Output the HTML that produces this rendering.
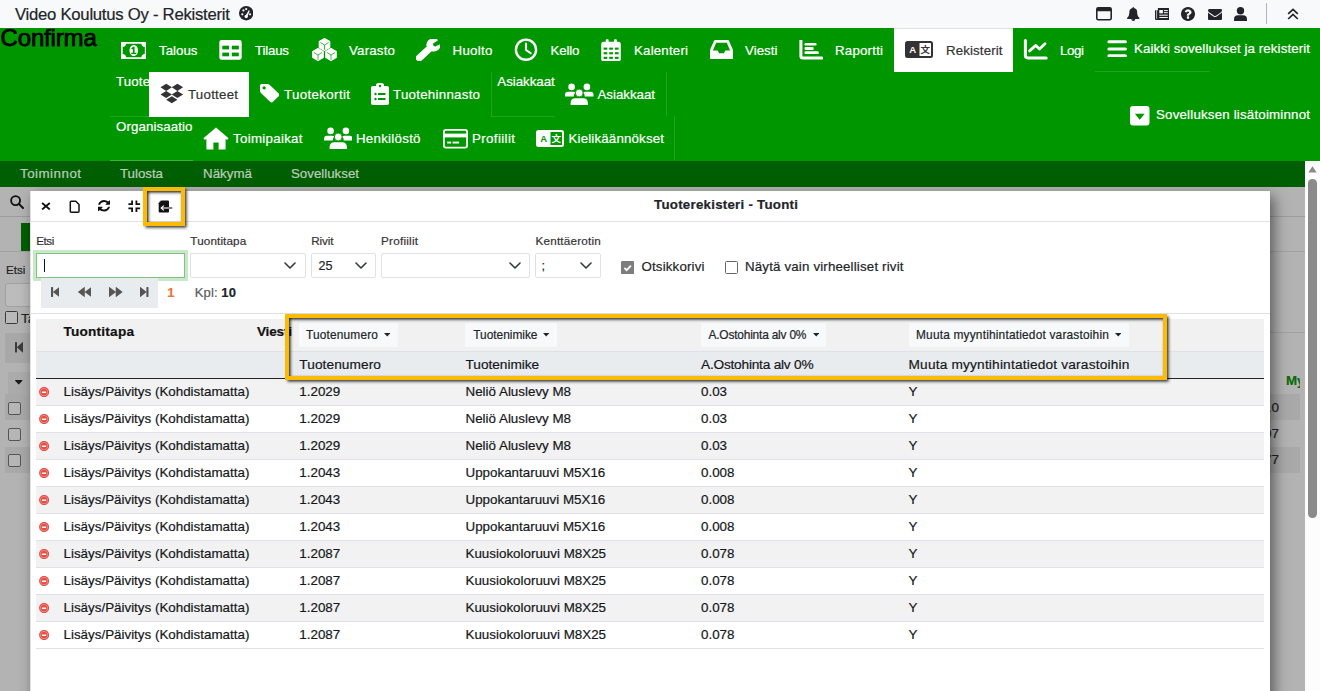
<!DOCTYPE html>
<html lang="fi"><head><meta charset="utf-8"><title>Video Koulutus Oy - Rekisterit</title>
<style>

*{box-sizing:border-box}
html,body{margin:0;padding:0}
body{width:1320px;height:691px;overflow:hidden;position:relative;background:#fff;font-family:"Liberation Sans",sans-serif;}
.t{position:absolute;white-space:nowrap;line-height:20px;font-family:"Liberation Sans",sans-serif;-webkit-text-stroke:0.2px currentColor;}
.b{position:absolute}

</style></head><body>
<div class="b" style="left:0px;top:0px;width:1320px;height:28px;background:#f8f9fa;"></div>
<div class="t" style="left:15px;top:5px;font-size:16.7px;letter-spacing:-0.257px;color:#212529;font-weight:400;">Video Koulutus Oy - Rekisterit</div>
<svg style="position:absolute;left:238.7px;top:6.4px;" width="14.4" height="14.4" viewBox="0 0 26 26" preserveAspectRatio="none"><circle cx="13" cy="13" r="13" fill="#212529"/><circle cx="6" cy="15" r="2" fill="#f8f9fa"/><circle cx="8" cy="8" r="2" fill="#f8f9fa"/><circle cx="13" cy="5.5" r="2" fill="#f8f9fa"/><circle cx="20" cy="15" r="2" fill="#f8f9fa"/><path d="M11 19 L17.5 7.5 L19.5 8.5 L15 20 Z" fill="#f8f9fa"/><circle cx="13" cy="19" r="3" fill="#f8f9fa"/></svg>
<svg style="position:absolute;left:1096px;top:7.2px;" width="16" height="13.6" viewBox="0 0 16 13.6" preserveAspectRatio="none"><rect x="0.8" y="0.8" width="14.4" height="12" rx="1.6" fill="none" stroke="#212529" stroke-width="1.6"/><rect x="0.8" y="0.8" width="14.4" height="3.4" rx="1" fill="#212529"/></svg>
<svg style="position:absolute;left:1127px;top:7px;" width="12.5" height="14" viewBox="64.0 0.0 1664.0 1792.0" preserveAspectRatio="none"><path fill="#212529" stroke="#212529" stroke-width="0" stroke-linejoin="round" transform="translate(0,1536) scale(1,-1)" d="M912 -160q0 16 -16 16q-59 0 -101.5 42.5t-42.5 101.5q0 16 -16 16t-16 -16q0 -73 51.5 -124.5t124.5 -51.5q16 0 16 16zM1728 128q0 -52 -38 -90t-90 -38h-448q0 -106 -75 -181t-181 -75t-181 75t-75 181h-448q-52 0 -90 38t-38 90q50 42 91 88t85 119.5t74.5 158.5 t50 206t19.5 260q0 152 117 282.5t307 158.5q-8 19 -8 39q0 40 28 68t68 28t68 -28t28 -68q0 -20 -8 -39q190 -28 307 -158.5t117 -282.5q0 -139 19.5 -260t50 -206t74.5 -158.5t85 -119.5t91 -88z"/></svg>
<svg style="position:absolute;left:1154.5px;top:7.6px;" width="14.4" height="12.2" viewBox="0 0 14.4 12.2" preserveAspectRatio="none"><path d="M2.9 0 H13.4 Q14.4 0 14.4 1 V11.2 Q14.4 12.2 13.4 12.2 H1.6 Q0 12.2 0 10.6 V2.2 H2.9 Z" fill="#212529"/><path d="M1.6 2.2 V10.8" stroke="#f8f9fa" stroke-width="0.7"/><rect x="4.3" y="2" width="3.6" height="3.3" fill="#f8f9fa"/><path d="M9 2.6 H12.8 M9 4.7 H12.8 M4.3 7.2 H12.8 M4.3 9.5 H12.8" stroke="#f8f9fa" stroke-width="1"/></svg>
<svg style="position:absolute;left:1181px;top:7px;" width="14" height="14" viewBox="0.0 128.0 1536.0 1536.0" preserveAspectRatio="none"><path fill="#212529" stroke="#212529" stroke-width="0" stroke-linejoin="round" transform="translate(0,1536) scale(1,-1)" d="M896 160v192q0 14 -9 23t-23 9h-192q-14 0 -23 -9t-9 -23v-192q0 -14 9 -23t23 -9h192q14 0 23 9t9 23zM1152 832q0 88 -55.5 163t-138.5 116t-170 41q-243 0 -371 -213q-15 -24 8 -42l132 -100q7 -6 19 -6q16 0 25 12q53 68 86 92q34 24 86 24q48 0 85.5 -26t37.5 -59 q0 -38 -20 -61t-68 -45q-63 -28 -115.5 -86.5t-52.5 -125.5v-36q0 -14 9 -23t23 -9h192q14 0 23 9t9 23q0 19 21.5 49.5t54.5 49.5q32 18 49 28.5t46 35t44.5 48t28 60.5t12.5 81zM1536 640q0 -209 -103 -385.5t-279.5 -279.5t-385.5 -103t-385.5 103t-279.5 279.5 t-103 385.5t103 385.5t279.5 279.5t385.5 103t385.5 -103t279.5 -279.5t103 -385.5z"/></svg>
<svg style="position:absolute;left:1208px;top:8.5px;" width="14" height="11" viewBox="0.0 256.0 1792.0 1408.0" preserveAspectRatio="none"><path fill="#212529" stroke="#212529" stroke-width="0" stroke-linejoin="round" transform="translate(0,1536) scale(1,-1)" d="M1792 826v-794q0 -66 -47 -113t-113 -47h-1472q-66 0 -113 47t-47 113v794q44 -49 101 -87q362 -246 497 -345q57 -42 92.5 -65.5t94.5 -48t110 -24.5h1h1q51 0 110 24.5t94.5 48t92.5 65.5q170 123 498 345q57 39 100 87zM1792 1120q0 -79 -49 -151t-122 -123 q-376 -261 -468 -325q-10 -7 -42.5 -30.5t-54 -38t-52 -32.5t-57.5 -27t-50 -9h-1h-1q-23 0 -50 9t-57.5 27t-52 32.5t-54 38t-42.5 30.5q-91 64 -262 182.5t-205 142.5q-62 42 -117 115.5t-55 136.5q0 78 41.5 130t118.5 52h1472q65 0 112.5 -47t47.5 -113z"/></svg>
<svg style="position:absolute;left:1234px;top:6.8px;" width="13" height="14" viewBox="0 0 13 14" preserveAspectRatio="none"><circle cx="6.5" cy="3.8" r="3.7" fill="#212529"/><path d="M0 14 V12.3 Q0 8.3 4 8.3 H9 Q13 8.3 13 12.3 V14 Z" fill="#212529"/></svg>
<div class="b" style="left:1266px;top:3px;width:1px;height:21px;background:#b0b4b8;"></div>
<svg style="position:absolute;left:1286.5px;top:7.5px;" width="12" height="12" viewBox="0 0 12 12" preserveAspectRatio="none"><path d="M1.2 5.8 L6 1.3 L10.8 5.8 M1.2 11 L6 6.5 L10.8 11" fill="none" stroke="#212529" stroke-width="1.7"/></svg>
<div class="b" style="left:0px;top:28px;width:1320px;height:133px;background:#009600;"></div>
<div class="t" style="left:0.5px;top:28px;font-size:24px;color:#000;font-weight:400;letter-spacing:-0.15px;-webkit-text-stroke:0.75px #000">Confirma</div>
<div class="b" style="left:894px;top:28px;width:119px;height:44px;background:#fff;"></div>
<div class="b" style="left:894px;top:28px;width:119px;height:1px;background:#dfe2e6;"></div>
<svg style="position:absolute;left:120.5px;top:41.5px;" width="25.5" height="17" viewBox="0.0 256.0 1920.0 1280.0" preserveAspectRatio="none"><path fill="#fff" stroke="#fff" stroke-width="0" stroke-linejoin="round" transform="translate(0,1536) scale(1,-1)" d="M768 384h384v96h-128v448h-114l-148 -137l77 -80q42 37 55 57h2v-288h-128v-96zM1280 640q0 -70 -21 -142t-59.5 -134t-101.5 -101t-138 -39t-138 39t-101.5 101t-59.5 134t-21 142t21 142t59.5 134t101.5 101t138 39t138 -39t101.5 -101t59.5 -134t21 -142zM1792 384 v512q-106 0 -181 75t-75 181h-1152q0 -106 -75 -181t-181 -75v-512q106 0 181 -75t75 -181h1152q0 106 75 181t181 75zM1920 1216v-1152q0 -26 -19 -45t-45 -19h-1792q-26 0 -45 19t-19 45v1152q0 26 19 45t45 19h1792q26 0 45 -19t19 -45z"/></svg>
<div class="t" style="left:159px;top:41px;font-size:13.3px;letter-spacing:0.011px;color:#fff;font-weight:400;">Talous</div>
<div class="t" style="left:255px;top:41px;font-size:13.3px;letter-spacing:-0.197px;color:#fff;font-weight:400;">Tilaus</div>
<div class="t" style="left:349px;top:41px;font-size:13.3px;letter-spacing:0.192px;color:#fff;font-weight:400;">Varasto</div>
<svg style="position:absolute;left:416px;top:39px;" width="24" height="22" viewBox="21.0 128.0 1641.0 1643.0" preserveAspectRatio="none"><path fill="#fff" stroke="#fff" stroke-width="90" stroke-linejoin="round" transform="translate(0,1536) scale(1,-1)" d="M384 64q0 26 -19 45t-45 19t-45 -19t-19 -45t19 -45t45 -19t45 19t19 45zM1028 484l-682 -682q-37 -37 -90 -37q-52 0 -91 37l-106 108q-38 36 -38 90q0 53 38 91l681 681q39 -98 114.5 -173.5t173.5 -114.5zM1662 919q0 -39 -23 -106q-47 -134 -164.5 -217.5 t-258.5 -83.5q-185 0 -316.5 131.5t-131.5 316.5t131.5 316.5t316.5 131.5q58 0 121.5 -16.5t107.5 -46.5q16 -11 16 -28t-16 -28l-293 -169v-224l193 -107q5 3 79 48.5t135.5 81t70.5 35.5q15 0 23.5 -10t8.5 -25z"/></svg>
<div class="t" style="left:452.5px;top:41px;font-size:13.3px;letter-spacing:0.311px;color:#fff;font-weight:400;">Huolto</div>
<div class="t" style="left:550.5px;top:41px;font-size:13.3px;letter-spacing:-0.144px;color:#fff;font-weight:400;">Kello</div>
<div class="t" style="left:634px;top:41px;font-size:13.3px;letter-spacing:0.188px;color:#fff;font-weight:400;">Kalenteri</div>
<svg style="position:absolute;left:709.5px;top:40px;" width="23" height="19" viewBox="0.0 256.0 1536.0 1280.0" preserveAspectRatio="none"><path fill="#fff" stroke="#fff" stroke-width="0" stroke-linejoin="round" transform="translate(0,1536) scale(1,-1)" d="M1023 576h316q-1 3 -2.5 8.5t-2.5 7.5l-212 496h-708l-212 -496q-1 -3 -2.5 -8.5t-2.5 -7.5h316l95 -192h320zM1536 546v-482q0 -26 -19 -45t-45 -19h-1408q-26 0 -45 19t-19 45v482q0 62 25 123l238 552q10 25 36.5 42t52.5 17h832q26 0 52.5 -17t36.5 -42l238 -552 q25 -61 25 -123z"/></svg>
<div class="t" style="left:745px;top:41px;font-size:13.3px;letter-spacing:0.043px;color:#fff;font-weight:400;">Viesti</div>
<div class="t" style="left:835px;top:41px;font-size:13.3px;letter-spacing:0.204px;color:#fff;font-weight:400;">Raportti</div>
<div class="t" style="left:946px;top:41px;font-size:13.3px;letter-spacing:0.119px;color:#333;font-weight:400;">Rekisterit</div>
<div class="t" style="left:1060px;top:41px;font-size:13.3px;letter-spacing:-0.382px;color:#fff;font-weight:400;">Logi</div>
<div class="t" style="left:1134px;top:39px;font-size:13.3px;letter-spacing:0.098px;color:#fff;font-weight:400;">Kaikki sovellukset ja rekisterit</div>
<svg style="position:absolute;left:799px;top:40px;" width="24" height="20" viewBox="0 0 24 20" preserveAspectRatio="none"><path d="M1.9 0.3 V16 Q1.9 18.1 4 18.1 H22.8" fill="none" stroke="#fff" stroke-width="3" stroke-linecap="round"/><rect x="5.5" y="3" width="12" height="2.5" rx="1.2" fill="#fff"/><rect x="5.5" y="7" width="9.2" height="2.9" rx="1.2" fill="#fff"/><rect x="5.5" y="11.2" width="14.3" height="2.9" rx="1.2" fill="#fff"/></svg>
<svg style="position:absolute;left:219px;top:40px;" width="23" height="20" viewBox="0 0 23 20" preserveAspectRatio="none"><rect x="0.3" y="0" width="22.4" height="19.8" rx="2.4" fill="#fff"/><rect x="3.3" y="5.7" width="6.7" height="3.7" fill="#009600"/><rect x="12.8" y="5.7" width="7" height="3.7" fill="#009600"/><rect x="3.3" y="12.6" width="6.7" height="3.7" fill="#009600"/><rect x="12.8" y="12.6" width="7" height="3.7" fill="#009600"/></svg>
<svg style="position:absolute;left:514px;top:38px;" width="24" height="24" viewBox="0 0 24 24" preserveAspectRatio="none"><circle cx="12" cy="11.7" r="10.1" fill="none" stroke="#fff" stroke-width="2.4"/><path d="M12 5.5 V12 L16.6 15.2" fill="none" stroke="#fff" stroke-width="2.1" stroke-linecap="round" stroke-linejoin="round"/></svg>
<svg style="position:absolute;left:601px;top:38.5px;" width="20" height="22.5" viewBox="0 0 20 22.5" preserveAspectRatio="none"><rect x="0.2" y="2.7" width="19.6" height="19.6" rx="2.4" fill="#fff"/><rect x="4.8" y="0.2" width="2.8" height="4" rx=".8" fill="#fff"/><rect x="13" y="0.2" width="2.8" height="4" rx=".8" fill="#fff"/><rect x="2.6" y="8.6" width="3.7" height="2.1" fill="#009600"/><rect x="2.6" y="13.2" width="3.7" height="2.1" fill="#009600"/><rect x="2.6" y="17.8" width="3.7" height="2.1" fill="#009600"/><rect x="8.2" y="8.6" width="3.7" height="2.1" fill="#009600"/><rect x="8.2" y="13.2" width="3.7" height="2.1" fill="#009600"/><rect x="8.2" y="17.8" width="3.7" height="2.1" fill="#009600"/><rect x="13.9" y="8.6" width="3.7" height="2.1" fill="#009600"/><rect x="13.9" y="13.2" width="3.7" height="2.1" fill="#009600"/><rect x="13.9" y="17.8" width="3.7" height="2.1" fill="#009600"/></svg>
<svg style="position:absolute;left:1023px;top:39px;" width="25" height="22" viewBox="0 0 25 22" preserveAspectRatio="none"><path d="M2.4 1.6 V16.6 Q2.4 18.9 4.7 18.9 H23.2" fill="none" stroke="#fff" stroke-width="3" stroke-linecap="round"/><path d="M6.6 11.9 L12.8 6.4 L16.5 10 L22 4.8" fill="none" stroke="#fff" stroke-width="2.8" stroke-linecap="round" stroke-linejoin="round"/></svg>
<svg style="position:absolute;left:1107px;top:40px;" width="20" height="17" viewBox="0 0 20 17" preserveAspectRatio="none"><path d="M1.9 1.8 H18.4 M1.9 8.9 H18.4 M1.9 15.8 H18.4" stroke="#fff" stroke-width="3" stroke-linecap="round"/></svg>
<svg style="position:absolute;left:310.5px;top:38px;" width="27" height="23.5" viewBox="0 0 27 23.5" preserveAspectRatio="none"><polygon points="13.50,0.60 18.72,3.60 18.72,9.60 13.50,12.60 8.28,9.60 8.28,3.60" fill="#fff" stroke="#fff" stroke-width="1.2" stroke-linejoin="round"/><path d="M9.48 4.50 L13.50 7.00 L17.52 4.50 M13.50 7.00 V11.80" fill="none" stroke="#009600" stroke-width="0.9" opacity=".8"/><polygon points="7.00,10.60 12.22,13.60 12.22,19.60 7.00,22.60 1.78,19.60 1.78,13.60" fill="#fff" stroke="#fff" stroke-width="1.2" stroke-linejoin="round"/><path d="M2.98 14.50 L7.00 17.00 L11.02 14.50 M7.00 17.00 V21.80" fill="none" stroke="#009600" stroke-width="0.9" opacity=".8"/><polygon points="20.00,10.60 25.22,13.60 25.22,19.60 20.00,22.60 14.78,19.60 14.78,13.60" fill="#fff" stroke="#fff" stroke-width="1.2" stroke-linejoin="round"/><path d="M15.98 14.50 L20.00 17.00 L24.02 14.50 M20.00 17.00 V21.80" fill="none" stroke="#009600" stroke-width="0.9" opacity=".8"/></svg>
<svg style="position:absolute;left:905px;top:41px;" width="28" height="17" viewBox="0 0 28 17" preserveAspectRatio="none"><rect x="0" y="0" width="28" height="17" rx="2.5" fill="#333"/><rect x="14.5" y="2" width="11.5" height="13" rx="0.5" fill="#fff"/><text x="7.6" y="12.2" font-family="Liberation Sans, sans-serif" font-weight="700" font-size="9.5" text-anchor="middle" fill="#fff">A</text><text x="20.2" y="12.3" font-family="Liberation Sans, Noto Sans CJK SC, sans-serif" font-weight="700" font-size="9.5" text-anchor="middle" fill="#333">文</text></svg>
<div class="b" style="left:1095px;top:71px;width:115px;height:1px;background:rgba(255,255,255,.13);"></div>
<div class="t" style="left:116px;top:72px;font-size:13.3px;color:#fff;font-weight:400;width:33px;overflow:hidden;letter-spacing:0.15px">Tuote</div>
<div class="b" style="left:110px;top:116px;width:39px;height:1px;background:rgba(255,255,255,.13);"></div>
<div class="b" style="left:149px;top:72px;width:100px;height:44.6px;background:#fff;"></div>
<svg style="position:absolute;left:160px;top:83px;" width="24" height="21" viewBox="0 0 24 21" preserveAspectRatio="none"><polygon points="0.5,4.3 6.2,0.6999999999999997 11.9,4.3 6.2,7.9" fill="#333"/><polygon points="11.7,4.3 17.4,0.6999999999999997 23.099999999999998,4.3 17.4,7.9" fill="#333"/><polygon points="0.5,11.5 6.2,7.9 11.9,11.5 6.2,15.1" fill="#333"/><polygon points="11.7,11.5 17.4,7.9 23.099999999999998,11.5 17.4,15.1" fill="#333"/><polygon points="6.200000000000001,16.7 11.8,13.2 17.4,16.7 11.8,20.2" fill="#333"/></svg>
<div class="t" style="left:188px;top:85px;font-size:13.3px;letter-spacing:0.242px;color:#333;font-weight:400;">Tuotteet</div>
<svg style="position:absolute;left:259.5px;top:84px;" width="19.5" height="18.5" viewBox="0.0 128.0 1515.0 1515.0" preserveAspectRatio="none"><path fill="#fff" stroke="#fff" stroke-width="0" stroke-linejoin="round" transform="translate(0,1536) scale(1,-1)" d="M448 1088q0 53 -37.5 90.5t-90.5 37.5t-90.5 -37.5t-37.5 -90.5t37.5 -90.5t90.5 -37.5t90.5 37.5t37.5 90.5zM1515 512q0 -53 -37 -90l-491 -492q-39 -37 -91 -37q-53 0 -90 37l-715 716q-38 37 -64.5 101t-26.5 117v416q0 52 38 90t90 38h416q53 0 117 -26.5t102 -64.5 l715 -714q37 -39 37 -91z"/></svg>
<div class="t" style="left:284px;top:85px;font-size:13.3px;letter-spacing:0.366px;color:#fff;font-weight:400;">Tuotekortit</div>
<svg style="position:absolute;left:371px;top:83px;" width="18" height="22" viewBox="0 0 18 22" preserveAspectRatio="none"><rect x="0" y="3" width="18" height="19" rx="2" fill="#fff"/><rect x="5" y="0" width="8" height="6" rx="2.5" fill="#fff"/><circle cx="9" cy="3" r="1.2" fill="#009600"/><circle cx="4.5" cy="11" r="1.2" fill="#009600"/><rect x="7" y="10" width="7.5" height="2" fill="#009600"/><circle cx="4.5" cy="16" r="1.2" fill="#009600"/><rect x="7" y="15" width="7.5" height="2" fill="#009600"/></svg>
<div class="t" style="left:393px;top:85px;font-size:13.3px;letter-spacing:0.267px;color:#fff;font-weight:400;">Tuotehinnasto</div>
<div class="b" style="left:491px;top:72px;width:1px;height:45px;background:rgba(255,255,255,.13);"></div>
<div class="b" style="left:491px;top:116px;width:64px;height:1px;background:rgba(255,255,255,.13);"></div>
<div class="t" style="left:497.3px;top:72px;font-size:13.3px;letter-spacing:-0.02px;color:#fff;font-weight:400;">Asiakkaat</div>
<svg style="position:absolute;left:565px;top:82.6px;" width="28.5" height="22.5" viewBox="0 0 28.5 22.5" preserveAspectRatio="none"><circle cx="6.6" cy="3.9" r="3.3" fill="#fff"/><circle cx="21.9" cy="3.9" r="3.3" fill="#fff"/><path d="M0 13.6 V11.6 Q0 8.7 3 8.7 H8.2 Q9.6 8.7 10.4 9.6 Q8.6 11.2 8.8 13.6 Z" fill="#fff"/><path d="M28.5 13.6 V11.6 Q28.5 8.7 25.5 8.7 H20.3 Q18.9 8.7 18.1 9.6 Q19.9 11.2 19.7 13.6 Z" fill="#fff"/><circle cx="14.25" cy="10" r="3.9" fill="#fff" stroke="#009600" stroke-width="0.9"/><path d="M5.6 22.5 V20.2 Q5.6 15.3 10.4 15.3 H18.1 Q22.9 15.3 22.9 20.2 V22.5 Z" fill="#fff"/></svg>
<div class="t" style="left:597.5px;top:85px;font-size:13.3px;letter-spacing:-0.02px;color:#fff;font-weight:400;">Asiakkaat</div>
<div class="b" style="left:666px;top:72px;width:1px;height:44px;background:rgba(255,255,255,.13);"></div>
<div class="b" style="left:674px;top:116px;width:1px;height:44px;background:rgba(255,255,255,.13);"></div>
<svg style="position:absolute;left:1130px;top:106px;" width="19.5" height="19.5" viewBox="0 0 20 20" preserveAspectRatio="none"><rect width="20" height="20" rx="3" fill="#fff"/><path d="M5 8 H15 L10 14 Z" fill="#009600"/></svg>
<div class="t" style="left:1156px;top:105px;font-size:13.3px;letter-spacing:0.194px;color:#fff;font-weight:400;">Sovelluksen lisätoiminnot</div>
<div class="t" style="left:116px;top:117px;font-size:13.3px;letter-spacing:0.09px;color:#fff;font-weight:400;">Organisaatio</div>
<div class="b" style="left:110px;top:160px;width:83px;height:1px;background:rgba(255,255,255,.25);"></div>
<svg style="position:absolute;left:203px;top:127px;" width="26" height="23" viewBox="0 0 26 23" preserveAspectRatio="none"><path d="M13 0.4 L25.6 11.2 L24 13 L22.6 11.8 V21.4 Q22.6 22.6 21.4 22.6 H15.6 V15.4 H10.4 V22.6 H4.6 Q3.4 22.6 3.4 21.4 V11.8 L2 13 L0.4 11.2 Z" fill="#fff"/></svg>
<div class="t" style="left:233px;top:129px;font-size:13.3px;letter-spacing:0.297px;color:#fff;font-weight:400;">Toimipaikat</div>
<svg style="position:absolute;left:323.8px;top:126.6px;" width="28.5" height="22.5" viewBox="0 0 28.5 22.5" preserveAspectRatio="none"><circle cx="6.6" cy="3.9" r="3.3" fill="#fff"/><circle cx="21.9" cy="3.9" r="3.3" fill="#fff"/><path d="M0 13.6 V11.6 Q0 8.7 3 8.7 H8.2 Q9.6 8.7 10.4 9.6 Q8.6 11.2 8.8 13.6 Z" fill="#fff"/><path d="M28.5 13.6 V11.6 Q28.5 8.7 25.5 8.7 H20.3 Q18.9 8.7 18.1 9.6 Q19.9 11.2 19.7 13.6 Z" fill="#fff"/><circle cx="14.25" cy="10" r="3.9" fill="#fff" stroke="#009600" stroke-width="0.9"/><path d="M5.6 22.5 V20.2 Q5.6 15.3 10.4 15.3 H18.1 Q22.9 15.3 22.9 20.2 V22.5 Z" fill="#fff"/></svg>
<div class="t" style="left:356px;top:129px;font-size:13.3px;letter-spacing:0.267px;color:#fff;font-weight:400;">Henkilöstö</div>
<svg style="position:absolute;left:442.7px;top:129px;" width="25" height="19.5" viewBox="0 0 25 19.5" preserveAspectRatio="none"><rect x="0.9" y="0.9" width="23.2" height="17.7" rx="2" fill="none" stroke="#fff" stroke-width="1.8"/><rect x="0.9" y="4.6" width="23.2" height="3.8" fill="#fff"/><rect x="4.2" y="12.6" width="4" height="1.9" fill="#fff"/><rect x="9.6" y="12.6" width="6.5" height="1.9" fill="#fff"/></svg>
<div class="t" style="left:472px;top:129px;font-size:13.3px;letter-spacing:0.386px;color:#fff;font-weight:400;">Profiilit</div>
<svg style="position:absolute;left:536.4px;top:130px;" width="28" height="17" viewBox="0 0 28 17" preserveAspectRatio="none"><rect x="0" y="0" width="28" height="17" rx="2.5" fill="#fff"/><rect x="14.5" y="2" width="11.5" height="13" rx="0.5" fill="#009600"/><text x="7.6" y="12.2" font-family="Liberation Sans, sans-serif" font-weight="700" font-size="9.5" text-anchor="middle" fill="#009600">A</text><text x="20.2" y="12.3" font-family="Liberation Sans, Noto Sans CJK SC, sans-serif" font-weight="700" font-size="9.5" text-anchor="middle" fill="#fff">文</text></svg>
<div class="t" style="left:568.5px;top:129px;font-size:13.3px;letter-spacing:0.167px;color:#fff;font-weight:400;">Kielikäännökset</div>
<div class="b" style="left:0px;top:161px;width:1320px;height:26px;background:#005f02;"></div>
<div class="t" style="left:20px;top:164px;font-size:13.3px;letter-spacing:0.51px;color:#bccdbc;font-weight:400;">Toiminnot</div>
<div class="t" style="left:120px;top:164px;font-size:13.3px;letter-spacing:-0.02px;color:#bccdbc;font-weight:400;">Tulosta</div>
<div class="t" style="left:203px;top:164px;font-size:13.3px;letter-spacing:0.044px;color:#bccdbc;font-weight:400;">Näkymä</div>
<div class="t" style="left:291px;top:164px;font-size:13.3px;letter-spacing:-0.001px;color:#bccdbc;font-weight:400;">Sovellukset</div>
<div class="b" style="left:0px;top:187px;width:1305px;height:504px;background:#b3b3b3;"></div>
<div class="b" style="left:1305px;top:161px;width:15px;height:530px;background:#fdfdfd;"></div>
<svg style="position:absolute;left:1308px;top:166px;" width="9" height="6.5" viewBox="0 0 9 6.5" preserveAspectRatio="none"><path d="M0.3 6.5 L4.5 0.3 L8.7 6.5 Z" fill="#8b8b8b"/></svg>
<div class="b" style="left:1308.3px;top:179px;width:8.4px;height:338.5px;background:#8b8b8b;border-radius:4.2px"></div>
<svg style="position:absolute;left:9.5px;top:194.5px;" width="14" height="14" viewBox="0 0 14 14" preserveAspectRatio="none"><circle cx="5.6" cy="5.6" r="4.5" fill="none" stroke="#111" stroke-width="1.8"/><path d="M8.9 8.9 L13 13" stroke="#111" stroke-width="2" stroke-linecap="round"/></svg>
<div class="b" style="left:0px;top:216px;width:1305px;height:1px;background:#9c9c9c;"></div>
<div class="b" style="left:21px;top:223px;width:20px;height:28px;background:#005f00;"></div>
<div class="b" style="left:0px;top:251px;width:1305px;height:1px;background:#a2a2a2;"></div>
<div class="t" style="left:6px;top:260px;font-size:11.6px;color:#222;font-weight:400;">Etsi</div>
<div class="b" style="left:5px;top:283px;width:40px;height:24px;background:#bcbcbc;border:1px solid #a0a0a0;border-radius:3px"></div>
<div class="b" style="left:5px;top:311px;width:13px;height:13px;background:#b9b9b9;border:1px solid #3a3a3a;border-radius:1.5px"></div>
<div class="t" style="left:21px;top:309px;font-size:13.4px;color:#222;font-weight:400;">Ta</div>
<div class="b" style="left:5px;top:332.5px;width:30px;height:30px;background:#a8a8a8;"></div>
<div class="b" style="left:1265px;top:332px;width:40px;height:1px;background:#a2a2a2;"></div>
<svg style="position:absolute;left:14.5px;top:342px;" width="8" height="10.5" viewBox="0.0 126.6 1024.0 1538.9" preserveAspectRatio="none"><path fill="#3c3c3c" stroke="#3c3c3c" stroke-width="0" stroke-linejoin="round" transform="translate(0,1536) scale(1,-1)" d="M979 1395q19 19 32 13t13 -32v-1472q0 -26 -13 -32t-32 13l-710 710q-9 9 -13 19v-678q0 -26 -19 -45t-45 -19h-128q-26 0 -45 19t-19 45v1408q0 26 19 45t45 19h128q26 0 45 -19t19 -45v-678q4 10 13 19z"/></svg>
<div class="b" style="left:8px;top:372px;width:30px;height:23px;background:#ababab;"></div>
<svg style="position:absolute;left:15px;top:380px;" width="7.5" height="4.5" viewBox="0.0 640.0 1024.0 576.0" preserveAspectRatio="none"><path fill="#1a1a1a" stroke="#1a1a1a" stroke-width="0" stroke-linejoin="round" transform="translate(0,1536) scale(1,-1)" d="M1024 832q0 -26 -19 -45l-448 -448q-19 -19 -45 -19t-45 19l-448 448q-19 19 -19 45t19 45t45 19h896q26 0 45 -19t19 -45z"/></svg>
<div class="b" style="left:5px;top:394px;width:30px;height:26px;background:#a9a9a9;"></div>
<div class="b" style="left:1265px;top:394px;width:35px;height:26px;background:#a9a9a9;"></div>
<div class="b" style="left:5px;top:447px;width:30px;height:26px;background:#a9a9a9;"></div>
<div class="b" style="left:1265px;top:447px;width:35px;height:26px;background:#a9a9a9;"></div>
<div class="b" style="left:8px;top:401.5px;width:13px;height:13px;background:#b6b6b6;border:1px solid #555;border-radius:2px"></div>
<div class="b" style="left:8px;top:427.5px;width:13px;height:13px;background:#b6b6b6;border:1px solid #555;border-radius:2px"></div>
<div class="b" style="left:8px;top:453.5px;width:13px;height:13px;background:#b6b6b6;border:1px solid #555;border-radius:2px"></div>
<div class="t" style="left:1286px;top:371px;font-size:13.3px;color:#0a6a0a;font-weight:700;width:14px;overflow:hidden">My</div>
<div class="t" style="left:0px;top:398px;font-size:13.4px;color:#222;font-weight:400;left:auto;right:41px">0.0</div>
<div class="t" style="left:0px;top:424px;font-size:13.4px;color:#222;font-weight:400;left:auto;right:41px">0.07</div>
<div class="t" style="left:0px;top:450px;font-size:13.4px;color:#222;font-weight:400;left:auto;right:41px">0.77</div>
<div class="b" style="left:30px;top:191px;width:1240px;height:520px;background:#fff;box-shadow:4px 5px 13px 0 rgba(0,0,0,.5)"></div>
<div class="b" style="left:30px;top:221px;width:1240px;height:1px;background:#dee2e6;"></div>
<div class="b" style="left:30px;top:191px;width:1px;height:500px;background:#dfe3e8;"></div>
<svg style="position:absolute;left:41px;top:202px;" width="10" height="8.4" viewBox="0 0 10 8.4" preserveAspectRatio="none"><path d="M1.1 1 L8.8 7.4 M8.8 1 L1.1 7.4" stroke="#111" stroke-width="1.9" fill="none"/></svg>
<svg style="position:absolute;left:68.5px;top:199.5px;" width="11.5" height="13.5" viewBox="0 0 11.5 13.5" preserveAspectRatio="none"><path d="M2.3 1.3 H6.8 L10 4.5 V11.2 Q10 12.2 9 12.2 H2.3 Q1.3 12.2 1.3 11.2 V2.3 Q1.3 1.3 2.3 1.3 Z" fill="none" stroke="#111" stroke-width="1.5" stroke-linejoin="round"/></svg>
<svg style="position:absolute;left:97.5px;top:200.3px;" width="12.2" height="11.5" viewBox="0.0 128.0 1536.0 1536.0" preserveAspectRatio="none"><path fill="#111" stroke="#111" stroke-width="0" stroke-linejoin="round" transform="translate(0,1536) scale(1,-1)" d="M1511 480q0 -5 -1 -7q-64 -268 -268 -434.5t-478 -166.5q-146 0 -282.5 55t-243.5 157l-129 -129q-19 -19 -45 -19t-45 19t-19 45v448q0 26 19 45t45 19h448q26 0 45 -19t19 -45t-19 -45l-137 -137q71 -66 161 -102t187 -36q134 0 250 65t186 179q11 17 53 117 q8 23 30 23h192q13 0 22.5 -9.5t9.5 -22.5zM1536 1280v-448q0 -26 -19 -45t-45 -19h-448q-26 0 -45 19t-19 45t19 45l138 138q-148 137 -349 137q-134 0 -250 -65t-186 -179q-11 -17 -53 -117q-8 -23 -30 -23h-199q-13 0 -22.5 9.5t-9.5 22.5v7q65 268 270 434.5t480 166.5 q146 0 284 -55.5t245 -156.5l130 129q19 19 45 19t45 -19t19 -45z"/></svg>
<svg style="position:absolute;left:128px;top:200px;" width="12.5" height="12.5" viewBox="0 0 12.5 12.5" preserveAspectRatio="none"><path d="M4.1 0.4 V4.1 H0.4 M8.4 0.4 V4.1 H12.1 M0.4 8.3 H4.1 V12 M12.1 8.3 H8.4 V12" fill="none" stroke="#111" stroke-width="1.8"/></svg>
<svg style="position:absolute;left:158px;top:199.5px;" width="15" height="13.5" viewBox="0 0 15 13.5" preserveAspectRatio="none"><path d="M3.4 0.5 H10 Q11 0.5 11 1.5 V11.5 Q11 12.5 10 12.5 H1.7 Q0.7 12.5 0.7 11.5 V3.2 Z" fill="#111"/><path d="M0.5 2.6 L2.8 0.3 V2.6 Z" fill="#111" opacity=".55"/><path d="M3.6 8 H11" stroke="#fff" stroke-width="1.1"/><path d="M11 8 H14.3" stroke="#111" stroke-width="1.1"/><path d="M5.8 5.6 L3.2 8 L5.8 10.4" fill="none" stroke="#fff" stroke-width="1.2"/></svg>
<div class="b" style="left:143.3px;top:187.2px;width:41.7px;height:38.8px;background:transparent;border:4px solid #fbba06;box-shadow:1.5px 1.5px 3px rgba(0,0,0,.85), inset 1.5px 1.5px 3px rgba(0,0,0,.85)"></div>
<div class="t" style="left:654px;top:195px;font-size:13.3px;letter-spacing:0.253px;color:#212529;font-weight:700;">Tuoterekisteri - Tuonti</div>
<div class="t" style="left:36.3px;top:231px;font-size:11.7px;letter-spacing:-0.501px;color:#333;font-weight:400;">Etsi</div>
<div class="t" style="left:190.3px;top:231px;font-size:11.7px;letter-spacing:0.127px;color:#333;font-weight:400;">Tuontitapa</div>
<div class="t" style="left:311.3px;top:231px;font-size:11.7px;letter-spacing:-0.137px;color:#333;font-weight:400;">Rivit</div>
<div class="t" style="left:381px;top:231px;font-size:11.7px;letter-spacing:0.237px;color:#333;font-weight:400;">Profiilit</div>
<div class="t" style="left:535.5px;top:231px;font-size:11.7px;letter-spacing:0.201px;color:#333;font-weight:400;">Kenttäerotin</div>
<div class="b" style="left:36px;top:253px;width:149px;height:25px;background:#fff;border:1px solid #7fc57f;border-radius:0;box-shadow:0 0 0 3px #c9e7c9"></div>
<div class="b" style="left:44px;top:259px;width:1px;height:13px;background:#111;"></div>
<div class="b" style="left:190px;top:253px;width:115.5px;height:25px;background:#fff;border:1px solid #dee2e6;border-radius:2px"></div>
<svg style="position:absolute;left:284px;top:262px;" width="12" height="7" viewBox="0 0 12 7" preserveAspectRatio="none"><path d="M1 1 L6 6 L11 1" fill="none" stroke="#343a40" stroke-width="1.6" stroke-linecap="round" stroke-linejoin="round"/></svg>
<div class="b" style="left:311px;top:253px;width:64.5px;height:25px;background:#fff;border:1px solid #dee2e6;border-radius:2px"></div>
<svg style="position:absolute;left:354.5px;top:262px;" width="12" height="7" viewBox="0 0 12 7" preserveAspectRatio="none"><path d="M1 1 L6 6 L11 1" fill="none" stroke="#343a40" stroke-width="1.6" stroke-linecap="round" stroke-linejoin="round"/></svg>
<div class="b" style="left:381px;top:253px;width:148.5px;height:25px;background:#fff;border:1px solid #dee2e6;border-radius:2px"></div>
<svg style="position:absolute;left:509px;top:262px;" width="12" height="7" viewBox="0 0 12 7" preserveAspectRatio="none"><path d="M1 1 L6 6 L11 1" fill="none" stroke="#343a40" stroke-width="1.6" stroke-linecap="round" stroke-linejoin="round"/></svg>
<div class="b" style="left:535px;top:253px;width:65.5px;height:25px;background:#fff;border:1px solid #dee2e6;border-radius:2px"></div>
<svg style="position:absolute;left:580px;top:262px;" width="12" height="7" viewBox="0 0 12 7" preserveAspectRatio="none"><path d="M1 1 L6 6 L11 1" fill="none" stroke="#343a40" stroke-width="1.6" stroke-linecap="round" stroke-linejoin="round"/></svg>
<div class="t" style="left:318.5px;top:256px;font-size:12.6px;color:#212529;font-weight:400;">25</div>
<div class="t" style="left:541.5px;top:256px;font-size:12.6px;color:#212529;font-weight:400;">;</div>
<svg style="position:absolute;left:621px;top:260.8px;" width="13.2" height="13.2" viewBox="0 0 14 14" preserveAspectRatio="none"><rect width="14" height="14" rx="1.2" fill="#7d7d7d"/><path d="M3.6 7.4 L6 9.8 L10.6 5" fill="none" stroke="#fff" stroke-width="1.9"/></svg>
<div class="t" style="left:641.5px;top:257px;font-size:13.3px;letter-spacing:0.167px;color:#212529;font-weight:400;">Otsikkorivi</div>
<div class="b" style="left:725px;top:260.8px;width:13px;height:13.2px;background:#fff;border:1px solid #666;border-radius:1.5px"></div>
<div class="t" style="left:745px;top:257px;font-size:13.3px;letter-spacing:0.17px;color:#212529;font-weight:400;">Näytä vain virheelliset rivit</div>
<div class="b" style="left:41px;top:278.3px;width:117px;height:29.3px;background:#e9ecef;"></div>
<svg style="position:absolute;left:50.5px;top:287px;" width="8.5" height="10" viewBox="0.0 126.6 1024.0 1538.9" preserveAspectRatio="none"><path fill="#555" stroke="#555" stroke-width="0" stroke-linejoin="round" transform="translate(0,1536) scale(1,-1)" d="M979 1395q19 19 32 13t13 -32v-1472q0 -26 -13 -32t-32 13l-710 710q-9 9 -13 19v-678q0 -26 -19 -45t-45 -19h-128q-26 0 -45 19t-19 45v1408q0 26 19 45t45 19h128q26 0 45 -19t19 -45v-678q4 10 13 19z"/></svg>
<svg style="position:absolute;left:77.5px;top:287px;" width="13.5" height="10" viewBox="122.0 126.6 1542.0 1538.9" preserveAspectRatio="none"><path fill="#555" stroke="#555" stroke-width="0" stroke-linejoin="round" transform="translate(0,1536) scale(1,-1)" d="M1619 1395q19 19 32 13t13 -32v-1472q0 -26 -13 -32t-32 13l-710 710q-9 9 -13 19v-710q0 -26 -13 -32t-32 13l-710 710q-19 19 -19 45t19 45l710 710q19 19 32 13t13 -32v-710q4 10 13 19z"/></svg>
<svg style="position:absolute;left:109px;top:287px;" width="13.5" height="10" viewBox="0.0 126.6 1542.0 1538.9" preserveAspectRatio="none"><path fill="#555" stroke="#555" stroke-width="0" stroke-linejoin="round" transform="translate(0,1536) scale(1,-1)" d="M45 -115q-19 -19 -32 -13t-13 32v1472q0 26 13 32t32 -13l710 -710q9 -9 13 -19v710q0 26 13 32t32 -13l710 -710q19 -19 19 -45t-19 -45l-710 -710q-19 -19 -32 -13t-13 32v710q-4 -10 -13 -19z"/></svg>
<svg style="position:absolute;left:140px;top:287px;" width="8.5" height="10" viewBox="0.0 126.6 1024.0 1538.9" preserveAspectRatio="none"><path fill="#555" stroke="#555" stroke-width="0" stroke-linejoin="round" transform="translate(0,1536) scale(1,-1)" d="M45 -115q-19 -19 -32 -13t-13 32v1472q0 26 13 32t32 -13l710 -710q9 -9 13 -19v678q0 26 19 45t45 19h128q26 0 45 -19t19 -45v-1408q0 -26 -19 -45t-45 -19h-128q-26 0 -45 19t-19 45v678q-4 -10 -13 -19z"/></svg>
<div class="t" style="left:167.3px;top:283px;font-size:13.1px;color:#e8763c;font-weight:700;">1</div>
<div class="t" style="left:194.8px;top:283px;font-size:13.0px;color:#5a5a5a;font-weight:400;letter-spacing:0.1px">Kpl: <b style="color:#212529">10</b></div>
<div class="b" style="left:30px;top:313px;width:1240px;height:1px;background:#dee2e6;"></div>
<div class="b" style="left:36px;top:319px;width:1228px;height:32px;background:#f1f1f1;"></div>
<div class="b" style="left:36px;top:351px;width:1228px;height:28px;background:#e9ecef;"></div>
<div class="b" style="left:36px;top:351px;width:1228px;height:1px;background:#dee2e6;"></div>
<div class="t" style="left:63.5px;top:322px;font-size:13.6px;letter-spacing:0.223px;color:#111;font-weight:700;">Tuontitapa</div>
<div class="t" style="left:257px;top:322px;font-size:13.6px;letter-spacing:-0.208px;color:#111;font-weight:700;">Viesti</div>
<div class="b" style="left:36px;top:379px;width:1228px;height:26px;background:#f2f2f2;"></div>
<div class="b" style="left:36px;top:405px;width:1228px;height:1px;background:#dee2e6;"></div>
<svg style="position:absolute;left:39px;top:387px;" width="10.2" height="10.2" viewBox="0 0 10 10" preserveAspectRatio="none"><circle cx="5" cy="5" r="4.9" fill="#dc4440"/><circle cx="5" cy="5" r="3.7" fill="#e84b3f" stroke="#f2a49c" stroke-width="0.7"/><rect x="2.9" y="4.3" width="4.2" height="1.6" rx=".3" fill="#fff"/></svg>
<div class="t" style="left:63.5px;top:382px;font-size:13.39px;color:#15181b;font-weight:400;">Lisäys/Päivitys (Kohdistamatta)</div>
<div class="t" style="left:299.3px;top:382px;font-size:13.39px;color:#15181b;font-weight:400;">1.2029</div>
<div class="t" style="left:465.5px;top:382px;font-size:13.39px;color:#15181b;font-weight:400;">Neliö Aluslevy M8</div>
<div class="t" style="left:701px;top:382px;font-size:13.39px;color:#15181b;font-weight:400;">0.03</div>
<div class="t" style="left:908.5px;top:382px;font-size:13.39px;color:#15181b;font-weight:400;">Y</div>
<div class="b" style="left:36px;top:406px;width:1228px;height:26px;background:#fff;"></div>
<div class="b" style="left:36px;top:432px;width:1228px;height:1px;background:#dee2e6;"></div>
<svg style="position:absolute;left:39px;top:414px;" width="10.2" height="10.2" viewBox="0 0 10 10" preserveAspectRatio="none"><circle cx="5" cy="5" r="4.9" fill="#dc4440"/><circle cx="5" cy="5" r="3.7" fill="#e84b3f" stroke="#f2a49c" stroke-width="0.7"/><rect x="2.9" y="4.3" width="4.2" height="1.6" rx=".3" fill="#fff"/></svg>
<div class="t" style="left:63.5px;top:409px;font-size:13.39px;color:#15181b;font-weight:400;">Lisäys/Päivitys (Kohdistamatta)</div>
<div class="t" style="left:299.3px;top:409px;font-size:13.39px;color:#15181b;font-weight:400;">1.2029</div>
<div class="t" style="left:465.5px;top:409px;font-size:13.39px;color:#15181b;font-weight:400;">Neliö Aluslevy M8</div>
<div class="t" style="left:701px;top:409px;font-size:13.39px;color:#15181b;font-weight:400;">0.03</div>
<div class="t" style="left:908.5px;top:409px;font-size:13.39px;color:#15181b;font-weight:400;">Y</div>
<div class="b" style="left:36px;top:433px;width:1228px;height:26px;background:#f2f2f2;"></div>
<div class="b" style="left:36px;top:459px;width:1228px;height:1px;background:#dee2e6;"></div>
<svg style="position:absolute;left:39px;top:441px;" width="10.2" height="10.2" viewBox="0 0 10 10" preserveAspectRatio="none"><circle cx="5" cy="5" r="4.9" fill="#dc4440"/><circle cx="5" cy="5" r="3.7" fill="#e84b3f" stroke="#f2a49c" stroke-width="0.7"/><rect x="2.9" y="4.3" width="4.2" height="1.6" rx=".3" fill="#fff"/></svg>
<div class="t" style="left:63.5px;top:436px;font-size:13.39px;color:#15181b;font-weight:400;">Lisäys/Päivitys (Kohdistamatta)</div>
<div class="t" style="left:299.3px;top:436px;font-size:13.39px;color:#15181b;font-weight:400;">1.2029</div>
<div class="t" style="left:465.5px;top:436px;font-size:13.39px;color:#15181b;font-weight:400;">Neliö Aluslevy M8</div>
<div class="t" style="left:701px;top:436px;font-size:13.39px;color:#15181b;font-weight:400;">0.03</div>
<div class="t" style="left:908.5px;top:436px;font-size:13.39px;color:#15181b;font-weight:400;">Y</div>
<div class="b" style="left:36px;top:460px;width:1228px;height:26px;background:#fff;"></div>
<div class="b" style="left:36px;top:486px;width:1228px;height:1px;background:#dee2e6;"></div>
<svg style="position:absolute;left:39px;top:468px;" width="10.2" height="10.2" viewBox="0 0 10 10" preserveAspectRatio="none"><circle cx="5" cy="5" r="4.9" fill="#dc4440"/><circle cx="5" cy="5" r="3.7" fill="#e84b3f" stroke="#f2a49c" stroke-width="0.7"/><rect x="2.9" y="4.3" width="4.2" height="1.6" rx=".3" fill="#fff"/></svg>
<div class="t" style="left:63.5px;top:463px;font-size:13.39px;color:#15181b;font-weight:400;">Lisäys/Päivitys (Kohdistamatta)</div>
<div class="t" style="left:299.3px;top:463px;font-size:13.39px;color:#15181b;font-weight:400;">1.2043</div>
<div class="t" style="left:465.5px;top:463px;font-size:13.39px;color:#15181b;font-weight:400;">Uppokantaruuvi M5X16</div>
<div class="t" style="left:701px;top:463px;font-size:13.39px;color:#15181b;font-weight:400;">0.008</div>
<div class="t" style="left:908.5px;top:463px;font-size:13.39px;color:#15181b;font-weight:400;">Y</div>
<div class="b" style="left:36px;top:487px;width:1228px;height:26px;background:#f2f2f2;"></div>
<div class="b" style="left:36px;top:513px;width:1228px;height:1px;background:#dee2e6;"></div>
<svg style="position:absolute;left:39px;top:495px;" width="10.2" height="10.2" viewBox="0 0 10 10" preserveAspectRatio="none"><circle cx="5" cy="5" r="4.9" fill="#dc4440"/><circle cx="5" cy="5" r="3.7" fill="#e84b3f" stroke="#f2a49c" stroke-width="0.7"/><rect x="2.9" y="4.3" width="4.2" height="1.6" rx=".3" fill="#fff"/></svg>
<div class="t" style="left:63.5px;top:490px;font-size:13.39px;color:#15181b;font-weight:400;">Lisäys/Päivitys (Kohdistamatta)</div>
<div class="t" style="left:299.3px;top:490px;font-size:13.39px;color:#15181b;font-weight:400;">1.2043</div>
<div class="t" style="left:465.5px;top:490px;font-size:13.39px;color:#15181b;font-weight:400;">Uppokantaruuvi M5X16</div>
<div class="t" style="left:701px;top:490px;font-size:13.39px;color:#15181b;font-weight:400;">0.008</div>
<div class="t" style="left:908.5px;top:490px;font-size:13.39px;color:#15181b;font-weight:400;">Y</div>
<div class="b" style="left:36px;top:514px;width:1228px;height:26px;background:#fff;"></div>
<div class="b" style="left:36px;top:540px;width:1228px;height:1px;background:#dee2e6;"></div>
<svg style="position:absolute;left:39px;top:522px;" width="10.2" height="10.2" viewBox="0 0 10 10" preserveAspectRatio="none"><circle cx="5" cy="5" r="4.9" fill="#dc4440"/><circle cx="5" cy="5" r="3.7" fill="#e84b3f" stroke="#f2a49c" stroke-width="0.7"/><rect x="2.9" y="4.3" width="4.2" height="1.6" rx=".3" fill="#fff"/></svg>
<div class="t" style="left:63.5px;top:517px;font-size:13.39px;color:#15181b;font-weight:400;">Lisäys/Päivitys (Kohdistamatta)</div>
<div class="t" style="left:299.3px;top:517px;font-size:13.39px;color:#15181b;font-weight:400;">1.2043</div>
<div class="t" style="left:465.5px;top:517px;font-size:13.39px;color:#15181b;font-weight:400;">Uppokantaruuvi M5X16</div>
<div class="t" style="left:701px;top:517px;font-size:13.39px;color:#15181b;font-weight:400;">0.008</div>
<div class="t" style="left:908.5px;top:517px;font-size:13.39px;color:#15181b;font-weight:400;">Y</div>
<div class="b" style="left:36px;top:541px;width:1228px;height:26px;background:#f2f2f2;"></div>
<div class="b" style="left:36px;top:567px;width:1228px;height:1px;background:#dee2e6;"></div>
<svg style="position:absolute;left:39px;top:549px;" width="10.2" height="10.2" viewBox="0 0 10 10" preserveAspectRatio="none"><circle cx="5" cy="5" r="4.9" fill="#dc4440"/><circle cx="5" cy="5" r="3.7" fill="#e84b3f" stroke="#f2a49c" stroke-width="0.7"/><rect x="2.9" y="4.3" width="4.2" height="1.6" rx=".3" fill="#fff"/></svg>
<div class="t" style="left:63.5px;top:544px;font-size:13.39px;color:#15181b;font-weight:400;">Lisäys/Päivitys (Kohdistamatta)</div>
<div class="t" style="left:299.3px;top:544px;font-size:13.39px;color:#15181b;font-weight:400;">1.2087</div>
<div class="t" style="left:465.5px;top:544px;font-size:13.39px;color:#15181b;font-weight:400;">Kuusiokoloruuvi M8X25</div>
<div class="t" style="left:701px;top:544px;font-size:13.39px;color:#15181b;font-weight:400;">0.078</div>
<div class="t" style="left:908.5px;top:544px;font-size:13.39px;color:#15181b;font-weight:400;">Y</div>
<div class="b" style="left:36px;top:568px;width:1228px;height:26px;background:#fff;"></div>
<div class="b" style="left:36px;top:594px;width:1228px;height:1px;background:#dee2e6;"></div>
<svg style="position:absolute;left:39px;top:576px;" width="10.2" height="10.2" viewBox="0 0 10 10" preserveAspectRatio="none"><circle cx="5" cy="5" r="4.9" fill="#dc4440"/><circle cx="5" cy="5" r="3.7" fill="#e84b3f" stroke="#f2a49c" stroke-width="0.7"/><rect x="2.9" y="4.3" width="4.2" height="1.6" rx=".3" fill="#fff"/></svg>
<div class="t" style="left:63.5px;top:571px;font-size:13.39px;color:#15181b;font-weight:400;">Lisäys/Päivitys (Kohdistamatta)</div>
<div class="t" style="left:299.3px;top:571px;font-size:13.39px;color:#15181b;font-weight:400;">1.2087</div>
<div class="t" style="left:465.5px;top:571px;font-size:13.39px;color:#15181b;font-weight:400;">Kuusiokoloruuvi M8X25</div>
<div class="t" style="left:701px;top:571px;font-size:13.39px;color:#15181b;font-weight:400;">0.078</div>
<div class="t" style="left:908.5px;top:571px;font-size:13.39px;color:#15181b;font-weight:400;">Y</div>
<div class="b" style="left:36px;top:595px;width:1228px;height:26px;background:#f2f2f2;"></div>
<div class="b" style="left:36px;top:621px;width:1228px;height:1px;background:#dee2e6;"></div>
<svg style="position:absolute;left:39px;top:603px;" width="10.2" height="10.2" viewBox="0 0 10 10" preserveAspectRatio="none"><circle cx="5" cy="5" r="4.9" fill="#dc4440"/><circle cx="5" cy="5" r="3.7" fill="#e84b3f" stroke="#f2a49c" stroke-width="0.7"/><rect x="2.9" y="4.3" width="4.2" height="1.6" rx=".3" fill="#fff"/></svg>
<div class="t" style="left:63.5px;top:598px;font-size:13.39px;color:#15181b;font-weight:400;">Lisäys/Päivitys (Kohdistamatta)</div>
<div class="t" style="left:299.3px;top:598px;font-size:13.39px;color:#15181b;font-weight:400;">1.2087</div>
<div class="t" style="left:465.5px;top:598px;font-size:13.39px;color:#15181b;font-weight:400;">Kuusiokoloruuvi M8X25</div>
<div class="t" style="left:701px;top:598px;font-size:13.39px;color:#15181b;font-weight:400;">0.078</div>
<div class="t" style="left:908.5px;top:598px;font-size:13.39px;color:#15181b;font-weight:400;">Y</div>
<div class="b" style="left:36px;top:622px;width:1228px;height:26px;background:#fff;"></div>
<div class="b" style="left:36px;top:648px;width:1228px;height:1px;background:#dee2e6;"></div>
<svg style="position:absolute;left:39px;top:630px;" width="10.2" height="10.2" viewBox="0 0 10 10" preserveAspectRatio="none"><circle cx="5" cy="5" r="4.9" fill="#dc4440"/><circle cx="5" cy="5" r="3.7" fill="#e84b3f" stroke="#f2a49c" stroke-width="0.7"/><rect x="2.9" y="4.3" width="4.2" height="1.6" rx=".3" fill="#fff"/></svg>
<div class="t" style="left:63.5px;top:625px;font-size:13.39px;color:#15181b;font-weight:400;">Lisäys/Päivitys (Kohdistamatta)</div>
<div class="t" style="left:299.3px;top:625px;font-size:13.39px;color:#15181b;font-weight:400;">1.2087</div>
<div class="t" style="left:465.5px;top:625px;font-size:13.39px;color:#15181b;font-weight:400;">Kuusiokoloruuvi M8X25</div>
<div class="t" style="left:701px;top:625px;font-size:13.39px;color:#15181b;font-weight:400;">0.078</div>
<div class="t" style="left:908.5px;top:625px;font-size:13.39px;color:#15181b;font-weight:400;">Y</div>
<div class="b" style="left:36px;top:377.8px;width:1228px;height:1.7px;background:#212529;"></div>
<div class="b" style="left:299px;top:323px;width:99px;height:24px;background:#f8f9fa;border-radius:2px"></div><div class="t" style="left:306px;top:325px;font-size:11.9px;letter-spacing:0.166px;color:#212529;font-weight:400;">Tuotenumero</div><svg style="position:absolute;left:383.8px;top:333.3px;" width="6.4" height="3.6" viewBox="0 0 6 3.5" preserveAspectRatio="none"><path d="M0 0 H6 L3 3.5 Z" fill="#212529"/></svg>
<div class="b" style="left:465px;top:323px;width:92px;height:24px;background:#f8f9fa;border-radius:2px"></div><div class="t" style="left:473.25px;top:325px;font-size:11.9px;letter-spacing:-0.013px;color:#212529;font-weight:400;">Tuotenimike</div><svg style="position:absolute;left:543.3px;top:333.3px;" width="6.4" height="3.6" viewBox="0 0 6 3.5" preserveAspectRatio="none"><path d="M0 0 H6 L3 3.5 Z" fill="#212529"/></svg>
<div class="b" style="left:701px;top:323px;width:125px;height:24px;background:#f8f9fa;border-radius:2px"></div><div class="t" style="left:708.5px;top:325px;font-size:11.9px;letter-spacing:-0.188px;color:#212529;font-weight:400;">A.Ostohinta alv 0%</div><svg style="position:absolute;left:812.8px;top:333.3px;" width="6.4" height="3.6" viewBox="0 0 6 3.5" preserveAspectRatio="none"><path d="M0 0 H6 L3 3.5 Z" fill="#212529"/></svg>
<div class="b" style="left:908.5px;top:323px;width:220.5px;height:24px;background:#f8f9fa;border-radius:2px"></div><div class="t" style="left:916px;top:325px;font-size:11.9px;letter-spacing:0.19px;color:#212529;font-weight:400;">Muuta myyntihintatiedot varastoihin</div><svg style="position:absolute;left:1114.8px;top:333.3px;" width="6.4" height="3.6" viewBox="0 0 6 3.5" preserveAspectRatio="none"><path d="M0 0 H6 L3 3.5 Z" fill="#212529"/></svg>
<div class="t" style="left:299.3px;top:355px;font-size:13.7px;letter-spacing:0.072px;color:#15181b;font-weight:400;">Tuotenumero</div>
<div class="t" style="left:465.5px;top:355px;font-size:13.7px;letter-spacing:-0.031px;color:#15181b;font-weight:400;">Tuotenimike</div>
<div class="t" style="left:701px;top:355px;font-size:13.7px;letter-spacing:-0.224px;color:#15181b;font-weight:400;">A.Ostohinta alv 0%</div>
<div class="t" style="left:908.5px;top:355px;font-size:13.7px;letter-spacing:0.184px;color:#15181b;font-weight:400;">Muuta myyntihintatiedot varastoihin</div>
<div class="b" style="left:285.1px;top:313.8px;width:881.9px;height:66.1px;background:transparent;border:4px solid #fbba06;box-shadow:1.5px 1.5px 3px rgba(0,0,0,.85), inset 1.5px 1.5px 3px rgba(0,0,0,.85)"></div>
</body></html>
